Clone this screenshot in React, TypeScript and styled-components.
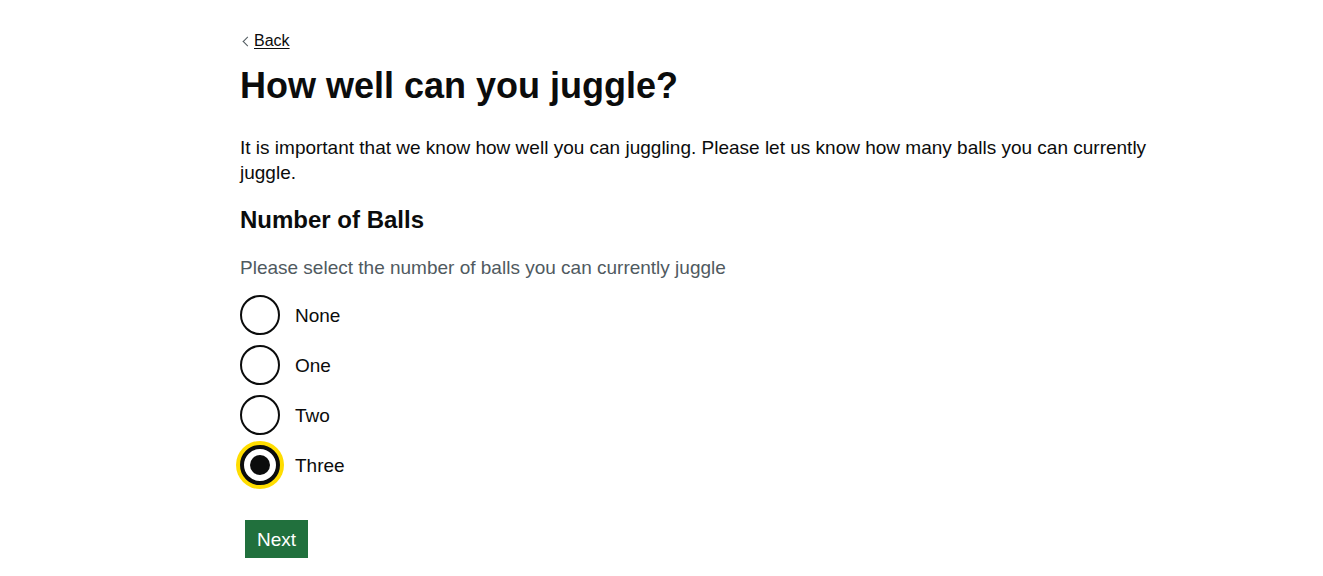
import React from "react";
import styled, { createGlobalStyle } from "styled-components";

const options = ["None", "One", "Two", "Three"];

export default function App() {
  const [selected, setSelected] = React.useState("Three");

  return (
    <>
      <GlobalStyle />
      <Page>
        <BackLink href="#">Back</BackLink>
        <Heading>How well can you juggle?</Heading>
        <Body>
          It is important that we know how well you can juggling. Please let us know how many balls you can currently
          juggle.
        </Body>
        <Fieldset>
          <Legend>Number of Balls</Legend>
          <Hint>Please select the number of balls you can currently juggle</Hint>
          <Radios>
            {options.map((option) => (
              <RadioItem key={option}>
                <RadioInput
                  type="radio"
                  name="balls"
                  id={`balls-${option}`}
                  checked={selected === option}
                  $focused={option === "Three"}
                  onChange={() => setSelected(option)}
                />
                <RadioLabel htmlFor={`balls-${option}`}>{option}</RadioLabel>
              </RadioItem>
            ))}
          </Radios>
        </Fieldset>
        <Button type="button">Next</Button>
      </Page>
    </>
  );
}

const GlobalStyle = createGlobalStyle`
  html, body {
    margin: 0;
    padding: 0;
    background: #ffffff;
  }
  body {
    font-family: "Liberation Sans", Arial, sans-serif;
    color: #0b0c0c;
    -webkit-font-smoothing: antialiased;
  }
`;

const Page = styled.main`
  display: flex;
  flex-direction: column;
  align-items: flex-start;
  width: 940px;
  margin-left: 240px;
  padding-top: 31px;
`;

const BackLink = styled.a`
  position: relative;
  display: inline-block;
  padding-left: 14px;
  font-size: 16px;
  line-height: 20px;
  color: #0b0c0c;
  text-decoration: underline;
  text-underline-offset: 2px;
  text-decoration-thickness: 1px;

  &::before {
    content: "";
    position: absolute;
    top: 0;
    bottom: 0;
    left: 4px;
    width: 6px;
    height: 6px;
    margin: auto 0;
    border: solid #505a5f;
    border-width: 1px 0 0 1px;
    transform: rotate(-45deg);
  }
`;

const Heading = styled.h1`
  margin: 15px 0 29px;
  font-size: 36px;
  line-height: 40px;
  font-weight: 700;
`;

const Body = styled.p`
  margin: 0 0 20px;
  font-size: 19px;
  line-height: 25px;
`;

const Fieldset = styled.fieldset`
  margin: 0 0 35px;
  padding: 0;
  border: 0;
  min-width: 0;
`;

const Legend = styled.legend`
  padding: 0;
  margin-bottom: 20px;
  font-size: 24px;
  line-height: 30px;
  font-weight: 700;
`;

const Hint = styled.div`
  margin-bottom: 15px;
  font-size: 19px;
  line-height: 25px;
  color: #505a5f;
`;

const Radios = styled.div`
  display: flex;
  flex-direction: column;
  gap: 10px;
`;

const RadioItem = styled.div`
  display: flex;
  align-items: center;
  gap: 15px;
  min-height: 40px;
`;

const RadioInput = styled.input<{ $focused?: boolean }>`
  appearance: none;
  position: relative;
  box-sizing: border-box;
  flex: none;
  width: 40px;
  height: 40px;
  margin: 0;
  border: ${(p) => (p.$focused ? "4px" : "2px")} solid #0b0c0c;
  border-radius: 50%;
  background: #ffffff;
  box-shadow: ${(p) => (p.$focused ? "0 0 0 4px #ffdd00" : "none")};
  cursor: pointer;

  &:checked::after {
    content: "";
    position: absolute;
    top: 50%;
    left: 50%;
    width: 20px;
    height: 20px;
    border-radius: 50%;
    background: #0b0c0c;
    transform: translate(-50%, -50%);
  }
`;

const RadioLabel = styled.label`
  font-size: 19px;
  line-height: 25px;
  cursor: pointer;
`;

const Button = styled.button`
  margin-left: 5px;
  padding: 8px 10px 7px;
  border: 2px solid transparent;
  border-radius: 0;
  background: #21703d;
  box-shadow: 0 2px 0 #0b2d18;
  color: #ffffff;
  font-family: "Liberation Sans", Arial, sans-serif;
  font-size: 19px;
  line-height: 19px;
  cursor: pointer;
`;
